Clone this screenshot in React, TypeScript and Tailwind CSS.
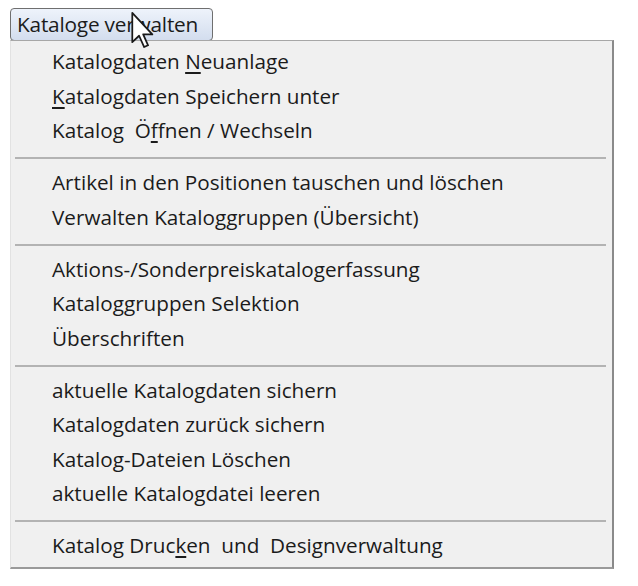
import React from 'react'

type Item = { before: string; key?: string; after?: string }

const groups: Item[][] = [
  [
    { before: 'Katalogdaten ', key: 'N', after: 'euanlage' },
    { before: '', key: 'K', after: 'atalogdaten Speichern unter' },
    { before: 'Katalog\u00a0 Ö', key: 'f', after: 'fnen / Wechseln' },
  ],
  [
    { before: 'Artikel in den Positionen tauschen und löschen' },
    { before: 'Verwalten Kataloggruppen (Übersicht)' },
  ],
  [
    { before: 'Aktions-/Sonderpreiskatalogerfassung' },
    { before: 'Kataloggruppen Selektion' },
    { before: 'Überschriften' },
  ],
  [
    { before: 'aktuelle Katalogdaten sichern' },
    { before: 'Katalogdaten zurück sichern' },
    { before: 'Katalog-Dateien Löschen' },
    { before: 'aktuelle Katalogdatei leeren' },
  ],
  [{ before: 'Katalog Druc', key: 'k', after: 'en\u00a0 und\u00a0 Designverwaltung' }],
]

function Cursor() {
  return (
    <svg className="absolute left-[131px] top-[12px]" width="24" height="37" viewBox="0 0 12 19">
      <path
        d="M0.5 0.5 L0.5 15.5 L4 12.2 L6.6 18 L8.6 17.1 L6.1 11.5 L10.8 11.5 Z"
        fill="#fff"
        stroke="#1a1a1a"
        strokeWidth="0.9"
        strokeLinejoin="round"
      />
    </svg>
  )
}

export default function App() {
  return (
    <div className="relative w-[638px] h-[586px] bg-white font-['Open_Sans',sans-serif] text-[#1b1b1b]">
      <div className="pt-[8px] pl-[10px]">
        <div className="w-[203px] h-[33px] flex items-center pl-[6px] pb-[1px] rounded-[4px] border border-[#6f6f6f] bg-gradient-to-b from-[#eef3fb] to-[#d3ddee] text-[20.8px] leading-none tracking-[-0.2px]">
          Kataloge verwalten
        </div>
        <div className="w-[604px] h-[529px] -mt-px pt-[5px] bg-[#f0f0f0] border-t border-t-[#a7a7a7] border-r-2 border-r-[#8a8a8a] border-b-2 border-b-[#9a9a9a] border-l border-l-[#e2e2e2]">
          {groups.map((g, gi) => (
            <div key={gi}>
              {gi > 0 && (
                <div className="h-[17.5px] flex items-center pl-[4px] pr-[6px]">
                  <div className="w-full h-[2px] bg-[#b3b3b3]" />
                </div>
              )}
              {g.map((it, i) => (
                <div key={i} className="h-[34.5px] flex items-center pl-[41px] pb-[3px] text-[20.7px] whitespace-pre">
                  {it.before}
                  {it.key && <span className="underline underline-offset-[3px]">{it.key}</span>}
                  {it.after}
                </div>
              ))}
            </div>
          ))}
        </div>
      </div>
      <Cursor />
    </div>
  )
}
